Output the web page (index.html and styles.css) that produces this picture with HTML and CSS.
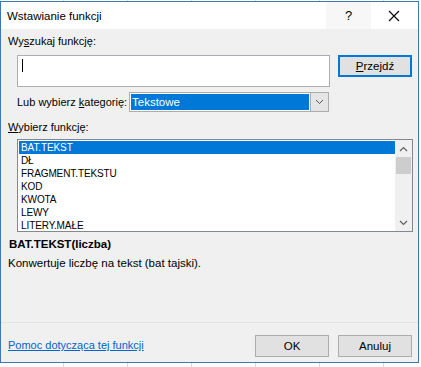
FILE: index.html
```html
<!DOCTYPE html>
<html lang="pl">
<head>
	<meta charset="utf-8">
	<title>Wstawianie funkcji</title>
	<link rel="stylesheet" href="styles.css">
</head>
<body>
	<div class="dialog">
		<div class="titlebar">
			<span class="title">Wstawianie funkcji</span>
			<span class="help">?</span>
			<span class="close">
				<svg width="12" height="12" viewBox="0 0 12 12"><path d="M1 1 L11 11 M11 1 L1 11" stroke="#000" stroke-width="1.1" fill="none"/></svg>
			</span>
		</div>

		<div class="content">
			<div class="label top-label">Wy<u>s</u>zukaj funkcję:</div>

			<div class="search-row">
				<div class="searchbox"><span class="caret"></span></div>
				<button class="btn btn-default"><u>P</u>rzejdź</button>
			</div>

			<div class="category-row">
				<span class="label">Lub wybierz <u>k</u>ategorię:</span>
				<div class="select">
					<span class="select-value">Tekstowe</span>
					<span class="select-arrow">
						<svg width="9" height="6" viewBox="0 0 9 6"><path d="M1 1 L4.5 4.5 L8 1" stroke="#555" stroke-width="1" fill="none"/></svg>
					</span>
				</div>
			</div>

			<div class="label list-label"><u>W</u>ybierz funkcję:</div>

			<div class="listbox">
				<ul class="items">
					<li class="selected">BAT.TEKST</li>
					<li>DŁ</li>
					<li>FRAGMENT.TEKSTU</li>
					<li>KOD</li>
					<li>KWOTA</li>
					<li>LEWY</li>
					<li>LITERY.MAŁE</li>
				</ul>
				<div class="scrollbar">
					<span class="arrow">
						<svg width="9" height="6" viewBox="0 0 9 6"><path d="M1 5 L4.5 1.5 L8 5" stroke="#606060" stroke-width="1.2" fill="none"/></svg>
					</span>
					<span class="thumb"></span>
					<span class="track"></span>
					<span class="arrow">
						<svg width="9" height="6" viewBox="0 0 9 6"><path d="M1 1 L4.5 4.5 L8 1" stroke="#606060" stroke-width="1.2" fill="none"/></svg>
					</span>
				</div>
			</div>

			<div class="signature">BAT.TEKST(liczba)</div>
			<div class="description">Konwertuje liczbę na tekst (bat tajski).</div>
		</div>

		<div class="footer">
			<a class="help-link" href="#">Pomoc dotycząca tej funkcji</a>
			<div class="buttons">
				<button class="btn">OK</button>
				<button class="btn">Anuluj</button>
			</div>
		</div>
	</div>
</body>
</html>
```

FILE: styles.css
```css
body {
	margin: 0;
	padding: 0;
	width: 421px;
	height: 367px;
	overflow: hidden;
	background-color: #ffffff;
	background-image: repeating-linear-gradient(to right, transparent 0, transparent 63px, #d9d9d9 63px, #d9d9d9 64px);
	font-family: "Liberation Sans", Arial, sans-serif;
	font-size: 11px;
	color: #000;
}

.dialog {
	margin-top: 1px;
	width: 417px;
	height: 360px;
	border: 1px solid #3a78b8;
	background: #f0f0f0;
	display: flex;
	flex-direction: column;
}

.titlebar {
	height: 27px;
	background: #fff;
	display: flex;
	align-items: center;
}

.title {
	flex: 1;
	padding-left: 6px;
	font-size: 11.5px;
}

.help {
	width: 45px;
	height: 27px;
	line-height: 27px;
	text-align: center;
	background: #f7f7f7;
	font-size: 13px;
}

.close {
	width: 46px;
	height: 27px;
	display: flex;
	align-items: center;
	justify-content: center;
	margin-right: 1px;
}

.content {
	padding: 0 0 0 7px;
	flex: 1;
}

.label {
	white-space: nowrap;
}

.top-label {
	margin-top: 5px;
	height: 15px;
	line-height: 15px;
}

.search-row {
	display: flex;
	margin-top: 6px;
	margin-left: 9px;
	align-items: flex-start;
}

.searchbox {
	width: 311px;
	height: 30px;
	background: #fff;
	border: 1px solid #abadb3;
	position: relative;
}

.caret {
	position: absolute;
	left: 4px;
	top: 3px;
	width: 1px;
	height: 13px;
	background: #000;
}

.btn {
	width: 74px;
	height: 22px;
	background: #e1e1e1;
	border: 1px solid #adadad;
	font-family: "Liberation Sans", Arial, sans-serif;
	font-size: 11.5px;
	color: #000;
	padding: 0;
}

.btn-default {
	margin-left: 8px;
	border: 2px solid #0078d7;
	width: 74px;
}

.category-row {
	display: flex;
	align-items: center;
	margin-top: 5px;
	margin-left: 9px;
	height: 20px;
}

.category-row .label {
	width: 112px;
}

.select {
	width: 198px;
	height: 18px;
	border: 1px solid #adadad;
	background: #fff;
	display: flex;
}

.select-value {
	flex: 1;
	margin: 1px;
	background: #0078d7;
	color: #fff;
	line-height: 16px;
	padding-left: 1px;
	font-size: 11.5px;
}

.select-arrow {
	width: 17px;
	background: #e5e5e5;
	border-left: 1px solid #adadad;
	display: flex;
	align-items: center;
	justify-content: center;
}

.list-label {
	margin-top: 8px;
	height: 15px;
	line-height: 15px;
}

.listbox {
	margin-top: 4px;
	margin-left: 9px;
	width: 394px;
	height: 91px;
	border: 1px solid #828790;
	background: #fff;
	display: flex;
	overflow: hidden;
}

.items {
	list-style: none;
	margin: 1px 0 0 1px;
	padding: 0;
	flex: 1;
	font-size: 10px;
	letter-spacing: -0.1px;
}

.items li {
	height: 13px;
	line-height: 13px;
	padding-left: 2px;
}

.items li.selected {
	background: #0078d7;
	color: #fff;
}

.scrollbar {
	width: 17px;
	background: #f0f0f0;
	display: flex;
	flex-direction: column;
	align-items: center;
}

.scrollbar .arrow {
	height: 17px;
	width: 17px;
	display: flex;
	align-items: center;
	justify-content: center;
}

.scrollbar .thumb {
	width: 15px;
	height: 17px;
	background: #cdcdcd;
}

.scrollbar .track {
	flex: 1;
}

.signature {
	margin-top: 5px;
	margin-left: 1px;
	font-weight: bold;
	font-size: 11.5px;
	height: 15px;
	line-height: 15px;
}

.description {
	margin-top: 4px;
	height: 15px;
	line-height: 15px;
	font-size: 11.5px;
}

.footer {
	box-sizing: border-box;
	border-top: 1px solid #e3e3e3;
	height: 40px;
	display: flex;
	align-items: flex-start;
	padding: 12px 6px 0 7px;
}

.help-link {
	flex: 1;
	color: #0066cc;
	text-decoration: underline;
	margin-top: 4px;
	font-size: 11px;
}

.buttons {
	display: flex;
	gap: 9px;
}
```
